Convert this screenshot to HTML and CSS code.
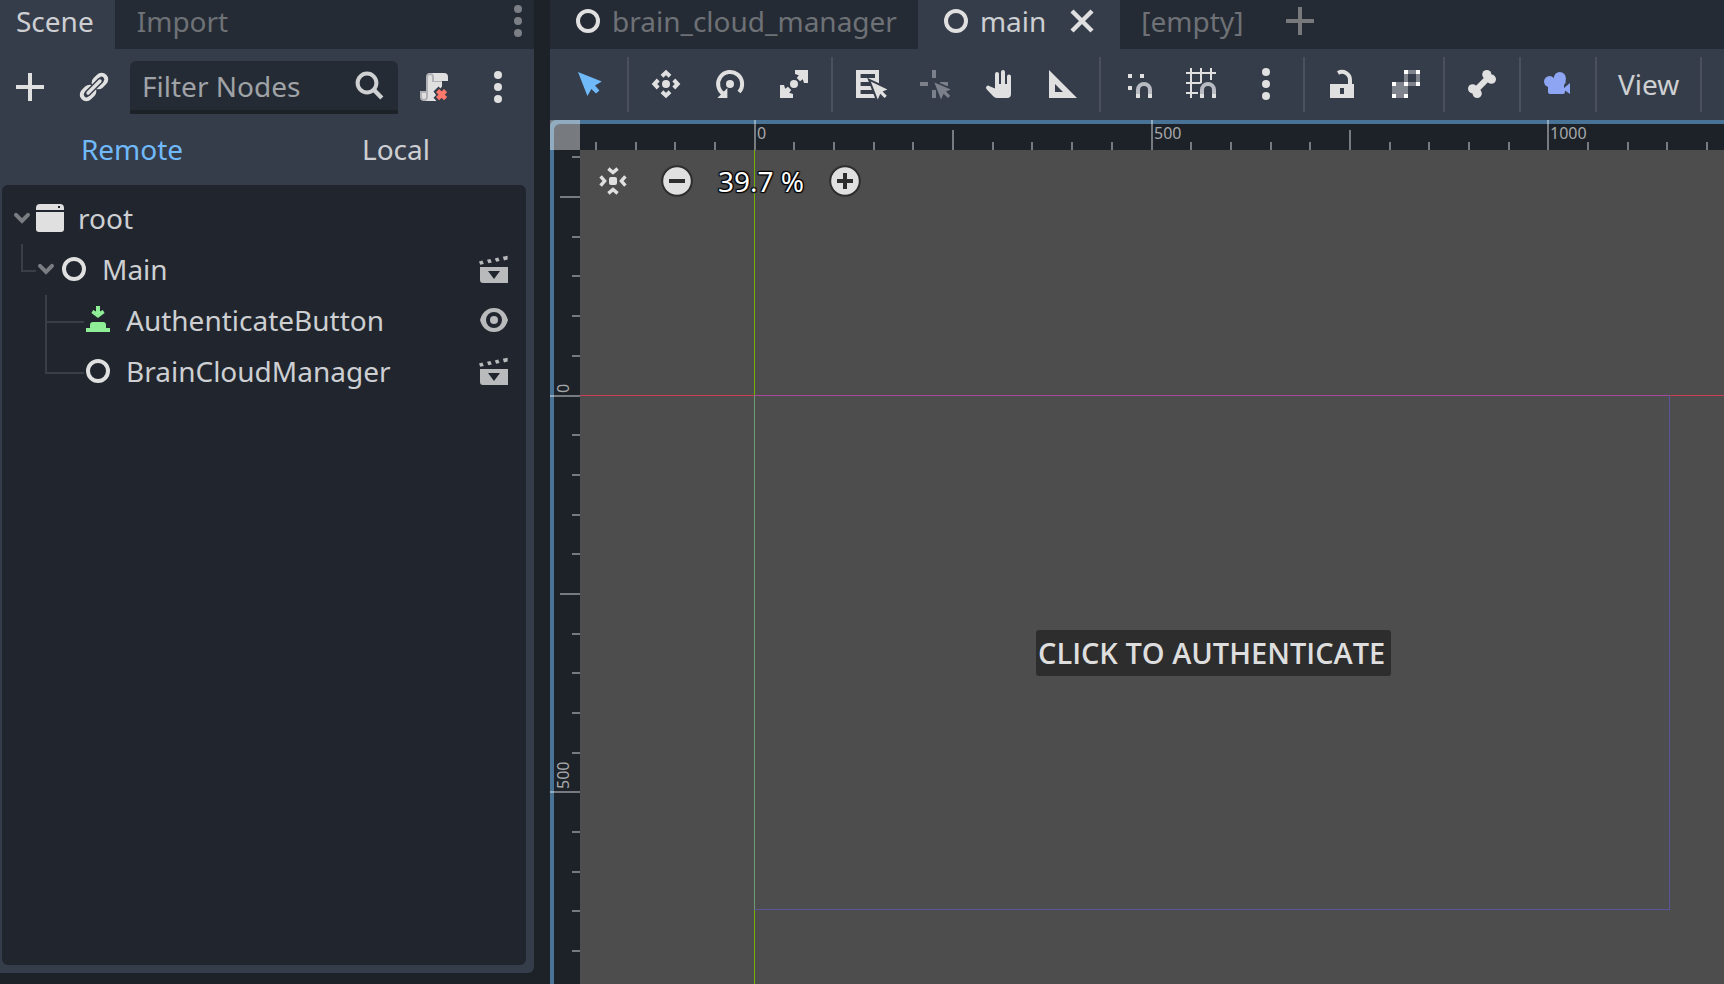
FILE: index.html
```html
<!DOCTYPE html>
<html lang="en">
<head>
<meta charset="utf-8">
<title>Scene editor</title>
<link rel="stylesheet" href="styles.css">
</head>
<body>
<svg class="defs" aria-hidden="true">
  <symbol id="i-node" viewBox="0 0 16 16"><circle cx="8" cy="8" r="5" fill="none" stroke="currentColor" stroke-width="2"/></symbol>
  <symbol id="i-dots" viewBox="0 0 16 16"><circle cx="8" cy="2" r="2"/><circle cx="8" cy="8" r="2"/><circle cx="8" cy="14" r="2"/></symbol>
  <symbol id="i-plus" viewBox="0 0 16 16"><path d="M7 1h2v6h6v2H9v6H7V9H1V7h6z"/></symbol>
  <symbol id="i-chevron" viewBox="0 0 12 16"><path d="M3 6.4 6 9.4 9 6.4" fill="none" stroke="currentColor" stroke-width="2" stroke-linecap="round"/></symbol>
  <symbol id="i-clapper" viewBox="0 0 16 16"><path fill-rule="evenodd" d="M1 7h14v8H2.5A1.5 1.5 0 0 1 1 13.500zM5 9l3 4 3-4z"/><path d="m.5 4.200 1.700-.400.700 1.700-1.800.400zM4.500 3.400l1.700-.400.700 1.700-1.700.400zM8.400 2.700l1.700-.400.700 1.700-1.700.400zM12.400 1.900 14.800 1.400V3.300L13 3.700z"/></symbol>
  <symbol id="i-magnet" viewBox="0 0 16 16"><path d="M8 13v-2a3 3 0 0 1 6 0v2" fill="none" stroke="#b9bcc2" stroke-width="2"/><path d="M7 13h2v2H7zM13 13h2v2h-2z"/></symbol>
</svg>

<aside class="dock">
  <nav class="tabs dock-tabs">
    <button class="tab active">Scene</button>
    <button class="tab">Import</button>
    <button class="tab-menu" aria-label="Dock options"><svg class="icon"><use href="#i-dots"/></svg></button>
  </nav>
  <div class="dock-body">
    <div class="filter-row">
      <button class="tool" aria-label="Add node"><svg class="icon"><use href="#i-plus"/></svg></button>
      <button class="tool" aria-label="Instance scene"><svg class="icon" viewBox="0 0 16 16"><g transform="translate(8 8) rotate(-45)" fill="none"><rect x="-7.700" y="-2.300" width="7" height="4.600" rx="2.300" stroke="currentColor" stroke-width="2"/><rect x=".7" y="-2.300" width="7" height="4.600" rx="2.300" stroke="currentColor" stroke-width="2"/><path d="M-4.400 0h8.800" stroke="#363d4a" stroke-width="3.200" stroke-linecap="round"/><path d="M-4.200 0h8.400" stroke="currentColor" stroke-width="1.700" stroke-linecap="round"/></g></svg></button>
      <label class="filter">
        <input type="text" placeholder="Filter Nodes" aria-label="Filter Nodes">
        <svg class="icon" viewBox="0 0 16 16"><g fill="none" stroke="currentColor"><circle cx="6.500" cy="6.500" r="4.700" stroke-width="2"/><path d="m9.900 9.900 4 4.100" stroke-width="2.200"/></g></svg>
      </label>
      <button class="tool" aria-label="Detach script"><svg class="icon" viewBox="0 0 16 16"><path d="M6 1a2 2 0 0 0-1.500 1v11L3 15h6.300l-1-1.500.9-1.200-1-1.500 1.800-2 .8.500L12 7.700V5h3V3a2 2 0 0 0-2-2z"/><path fill="#b0b2b5" d="M6 1a2 2 0 0 0-2 2v7H1v3a2 2 0 0 0 4 0V3a1 1 0 0 1 2 0v2.500h5V5H8V3a2 2 0 0 0-2-2z"/><path d="M2 11h2v2a1 1 0 0 1-2 0z"/><path d="M9 9l5.600 5.600M14.600 9 9 14.600" stroke="#363d4a" stroke-width="3.600"/><path d="M9.800 9.800l4 4M13.800 9.800l-4 4" stroke="#ff786b" stroke-width="2.200"/></svg></button>
      <button class="tool" aria-label="More"><svg class="icon"><use href="#i-dots"/></svg></button>
    </div>
    <div class="mode-row">
      <button class="mode on">Remote</button>
      <button class="mode">Local</button>
    </div>
    <ul class="tree">
      <li>
        <div class="row"><svg class="arrow"><use href="#i-chevron"/></svg><svg class="icon" viewBox="0 0 16 16"><path fill-rule="evenodd" d="M3 1h10a2 2 0 0 1 2 2v1H1V3a2 2 0 0 1 2-2zM12 2v1h1V2z"/><path d="M1 5h14v8.500a1.500 1.500 0 0 1-1.500 1.500h-11A1.500 1.500 0 0 1 1 13.500z"/></svg><span class="name">root</span></div>
        <ul>
          <li class="branch">
            <div class="row"><svg class="arrow"><use href="#i-chevron"/></svg><svg class="icon"><use href="#i-node"/></svg><span class="name">Main</span><button class="side" aria-label="Open scene"><svg class="icon"><use href="#i-clapper"/></svg></button></div>
            <ul>
              <li class="leaf">
                <div class="row"><svg class="icon green" viewBox="0 0 16 16"><path d="M7 1h2v2.800l1.400-.8.900 1.500L8 7 4.700 4.500l.9-1.500L7 3.800zM2 12h2v-1.500A1.500 1.500 0 0 1 5.500 9h5a1.500 1.500 0 0 1 1.500 1.500V12h2v2H2z"/></svg><span class="name">AuthenticateButton</span><button class="side" aria-label="Toggle visibility"><svg class="icon" viewBox="0 0 16 16"><path fill-rule="evenodd" d="M8 2c3.600 0 6 2.400 7 6-1 3.600-3.400 6-7 6s-6-2.400-7-6c1-3.600 3.400-6 7-6zM8 4a4 4 0 0 0 0 8 4 4 0 0 0 0-8z"/><circle cx="8" cy="8" r="2"/></svg></button></div>
              </li>
              <li class="leaf">
                <div class="row"><svg class="icon"><use href="#i-node"/></svg><span class="name">BrainCloudManager</span><button class="side" aria-label="Open scene"><svg class="icon"><use href="#i-clapper"/></svg></button></div>
              </li>
            </ul>
          </li>
        </ul>
      </li>
    </ul>
  </div>
</aside>

<main class="workspace">
  <nav class="tabs">
    <button class="tab scene"><svg class="icon"><use href="#i-node"/></svg>brain_cloud_manager</button>
    <button class="tab scene active"><svg class="icon"><use href="#i-node"/></svg>main<svg class="icon close" viewBox="0 0 16 16"><path d="m3 3 10 10M13 3 3 13" stroke="currentColor" stroke-width="2.200"/></svg></button>
    <button class="tab empty">[empty]</button>
    <button class="tab-add" aria-label="New scene"><svg class="icon"><use href="#i-plus"/></svg></button>
  </nav>

  <div class="toolbar">
    <button class="tool blue" aria-label="Select"><svg class="icon" viewBox="0 0 16 16"><path d="m2 2 4.700 12 2-3.500 2.300 2.200 1.700-1.500-2.200-2.400L13.900 6.700z"/></svg></button>
    <span class="sep"></span>
    <button class="tool" aria-label="Move"><svg class="icon" viewBox="0 0 16 16"><circle cx="8" cy="8" r="2"/><path d="M6 4.100 8 2.200l2 1.900M6 11.900l2 1.900 2-1.900M4.100 6 2.200 8l1.900 2M11.900 6l1.900 2-1.900 2" fill="none" stroke="currentColor" stroke-width="2"/></svg></button>
    <button class="tool" aria-label="Rotate"><svg class="icon" viewBox="0 0 16 16"><circle cx="8" cy="8" r="2"/><path d="M4.800 13A6 6 0 1 1 12.500 12" fill="none" stroke="currentColor" stroke-width="2"/><path d="M1.700 15h5v-5z"/></svg></button>
    <button class="tool" aria-label="Scale"><svg class="icon" viewBox="0 0 16 16"><circle cx="8" cy="8" r="2"/><path d="M8.500 1H15v6.500h-2l-.6-1.900L11 6.600 9.400 5l1-1.400L8.500 3zM7.500 15H1V8.500h2l.6 1.900L5 9.400 6.600 11l-1 1.400 1.900.6z"/></svg></button>
    <span class="sep"></span>
    <button class="tool" aria-label="List select"><svg class="icon" viewBox="0 0 16 16"><path fill-rule="evenodd" d="M1 1h11.500v14H1zM3.300 3v2h7.200V3zM3.300 7v2h9.200V7zM3.300 11v2h9.200v-2z"/><path d="M10.500 5h2v3h-2z"/><path d="m8.400 6.800 3.500 9 1.200-2.900 2.200 2.100 1.100-1.100-2.100-2.200 2.400-1z" stroke="#363d4a" stroke-width="2"/><path d="m8.400 6.800 3.500 9 1.200-2.900 2.200 2.100 1.100-1.100-2.100-2.200 2.400-1z"/></svg></button>
    <button class="tool dim" aria-label="Pivot"><svg class="icon" viewBox="0 0 16 16"><path d="M7 1h2v4H7zM1 7h4v2H1zM11 7h4v2h-4zM7 11h2v4H7z"/><path d="m8.200 7.200 3.300 8.600 1.300-2.900 2.200 2.100 1.100-1.100-2.100-2.200 2.400-1z" stroke="#363d4a" stroke-width="1.600"/><path d="m8.200 7.200 3.300 8.600 1.300-2.900 2.200 2.100 1.100-1.100-2.100-2.200 2.400-1z"/></svg></button>
    <button class="tool" aria-label="Pan"><svg class="icon" viewBox="0 0 16 16"><path d="M7.500 2a1 1 0 0 0-1 1v7.200L3.800 9.100a1 1 0 0 0-1.500 1.500L5.500 14a3 3 0 0 0 2 1h5a2 2 0 0 0 2-2V4.200a1 1 0 0 0-2 0V8h-1V2a1 1 0 0 0-2 0v6h-1V3a1 1 0 0 0-1-1z"/></svg></button>
    <button class="tool" aria-label="Ruler"><svg class="icon" viewBox="0 0 16 16"><path fill-rule="evenodd" d="M1.500 1v14h14zM4.500 8v4h4z"/></svg></button>
    <span class="sep"></span>
    <button class="tool" aria-label="Smart snap"><svg class="icon" viewBox="0 0 16 16"><path d="M3 3h2v2H3zM9 3h2v2H9zM3 9h2v2H3z"/><use href="#i-magnet"/></svg></button>
    <button class="tool" aria-label="Grid snap"><svg class="icon" viewBox="0 0 16 16"><path d="M2 0h1v2h4V0h1v2h4V0h1v2h2v1h-2v3h-1V3H8v4.500L7 8H3v4h3v1H3v2H2v-2H0v-1h2V8H0V7h2V3H0V2h2zM3 3v4h4V3z" fill-rule="evenodd"/><use href="#i-magnet"/></svg></button>
    <button class="tool" aria-label="Snapping options"><svg class="icon"><use href="#i-dots"/></svg></button>
    <span class="sep"></span>
    <button class="tool" aria-label="Lock"><svg class="icon" viewBox="0 0 16 16"><path fill-rule="evenodd" d="M2 8h12v7H2zM7 10v3h2v-3z"/><path d="M6 2.500A4 4 0 0 1 12 6v2.500" fill="none" stroke="currentColor" stroke-width="2"/></svg></button>
    <button class="tool" aria-label="Group"><svg class="icon" viewBox="0 0 16 16"><path fill="#7f838c" d="M1 7h8v8H1z"/><path fill="none" stroke="#7f838c" stroke-width="2" d="M8 2h6v6H8z"/><path fill="#fff" d="M1 7h2v2H1zM1 13h2v2H1zM7 13h2v2H7zM7 7h2v2H7zM7 1h2v2H7zM13 1h2v2h-2zM13 7h2v2h-2z"/></svg></button>
    <span class="sep"></span>
    <button class="tool" aria-label="Skeleton"><svg class="icon" viewBox="0 0 16 16"><circle cx="10.400" cy="3.300" r="2.300"/><circle cx="12.700" cy="5.600" r="2.300"/><circle cx="3.300" cy="10.400" r="2.300"/><circle cx="5.600" cy="12.700" r="2.300"/><path d="m4.600 11.400 6.800-6.800" stroke="currentColor" stroke-width="3"/></svg></button>
    <span class="sep"></span>
    <button class="tool violet" aria-label="Camera override"><svg class="icon" viewBox="0 0 16 16"><circle cx="3.800" cy="6.800" r="2.800"/><circle cx="8.900" cy="5" r="3"/><path d="M3 7l6-2h2.800v2.500q-.8.500-.8 1.500v1l3-2.500V13l-2.500-1.800v.8a1 1 0 0 1-1 1H4a1 1 0 0 1-1-1z"/></svg></button>
    <span class="sep"></span>
    <button class="tool">View</button>
    <span class="sep"></span>
  </div>

  <section class="viewport">
    <div class="corner"></div>
    <svg class="ruler-h" id="ruler-h"></svg>
    <svg class="ruler-v" id="ruler-v"></svg>
    <div class="canvas">
      <div class="axis-x"></div>
      <div class="axis-y"></div>
      <div class="frame"></div>
      <button class="auth">CLICK TO AUTHENTICATE</button>
      <div class="zoom">
        <button aria-label="Center view"><svg class="icon" viewBox="0 0 16 16"><rect x="6" y="6" width="4" height="4" rx="1"/><path d="M5.700 1.800 8 3.800l2.300-2M5.700 14.200l2.300-2 2.300 2M1.800 5.700l2 2.300-2 2.300M14.200 5.700l-2 2.300 2 2.300" fill="none" stroke="currentColor" stroke-width="1.700"/></svg></button>
        <button aria-label="Zoom out"><svg class="icon" viewBox="0 0 16 16"><circle cx="8" cy="8" r="7.400" stroke="#2e2e2e"/><path d="M4 7h8v2H4z" fill="#2e2e2e"/></svg></button>
        <button class="percent">39.7 %</button>
        <button aria-label="Zoom in"><svg class="icon" viewBox="0 0 16 16"><circle cx="8" cy="8" r="7.400" stroke="#2e2e2e"/><path d="M7 4h2v3h3v2H9v3H7V9H4V7h3z" fill="#2e2e2e"/></svg></button>
      </div>
    </div>
  </section>
</main>
<script src="rulers.js"></script>
</body>
</html>
```
FILE: styles.css
```css
:root {
  --base: #363d4a;
  --dark: #252b34;
  --darker: #1d2229;
  --tree: #21262e;
  --text: #cdcfd2;
  --icon: #e0e0e0;
  --muted: #6e7176;
}

* { box-sizing: border-box; }

body {
  margin: 0;
  height: 100vh;
  display: flex;
  gap: 16px;
  overflow: hidden;
  background: var(--darker);
  color: var(--text);
  font: 28px/38px "Noto Sans", "Open Sans", sans-serif;
}

button, input {
  font: inherit;
  color: inherit;
  background: none;
  border: 0;
  padding: 0;
  margin: 0;
}

ul { list-style: none; margin: 0; padding: 0; }

.defs { position: absolute; width: 0; height: 0; }

.icon {
  display: block;
  flex: none;
  width: 32px;
  height: 32px;
  color: var(--icon);
  fill: currentColor;
  overflow: visible;
}

.tabs {
  display: flex;
  height: 49px;
  flex: none;
  background: var(--dark);
}

.tab {
  display: flex;
  align-items: center;
  padding: 0 21px 7px;
  color: var(--muted);
}

.tab.active { background: var(--base); color: var(--text); }

/* Dock */
.dock {
  width: 31%;
  max-width: 534px;
  flex: none;
  display: flex;
  flex-direction: column;
  padding-bottom: 11px;
}

.dock-tabs .tab { padding: 0 22px 7px; }
.dock-tabs .tab.active { padding: 0 21px 7px 16px; }
.tab-menu { margin-left: auto; padding-bottom: 7px; }
.tab-menu .icon { color: #7c7f85; }

.dock-body {
  flex: 1;
  display: flex;
  flex-direction: column;
  padding: 12px 8px 8px 2px;
  background: var(--base);
  border-radius: 0 0 6px 0;
}

.filter-row { display: flex; gap: 8px; }

.filter-row .tool {
  width: 56px;
  display: flex;
  align-items: center;
  justify-content: center;
  padding-bottom: 1px;
}

.filter {
  flex: 1;
  min-width: 0;
  display: flex;
  align-items: center;
  height: 53px;
  padding: 0 12px;
  background: var(--dark);
  border-bottom: 4px solid var(--darker);
  border-radius: 6px 6px 0 0;
}

.filter input { flex: 1; min-width: 0; outline: 0; }
.filter input::placeholder { color: #9fa2a6; opacity: 1; }
.filter .icon { color: #cfd0d2; }

.mode-row { display: flex; gap: 4px; padding: 16px 0 17px; }
.mode { flex: 1; }
.mode.on { color: #70bafa; }

.tree {
  flex: 1;
  padding: 8px;
  background: var(--tree);
  border-radius: 6px;
}

.tree ul { padding-left: 24px; }
.tree li { position: relative; }
.row { display: flex; align-items: center; height: 51px; padding-bottom: 1px; }
.leaf .row { padding-left: 24px; }
.arrow { width: 24px; height: 32px; color: #7a7d82; }
.name { margin-left: 12px; flex: 1; }
.side { margin-right: 8px; }
.side .icon { color: #b9babc; }
.green { color: #8eef97; }

.branch::before, .leaf::before {
  content: "";
  position: absolute;
  left: -13px;
  top: 0;
  width: 13px;
  height: 26px;
  border: solid #3a3f47;
  border-width: 0 0 2px 2px;
}

.leaf::before { width: 37px; }

.leaf:not(:last-child)::after {
  content: "";
  position: absolute;
  left: -13px;
  top: 0;
  bottom: 0;
  width: 2px;
  background: #3a3f47;
}

/* Workspace */
.workspace {
  flex: 1;
  min-width: 0;
  display: flex;
  flex-direction: column;
}

.scene { padding: 0 22px 7px; gap: 8px; }
.scene:first-child { padding-right: 21px; }
.scene .close { margin-left: 12px; }
.tab-add { padding: 0 20px 7px; }
.tab-add .icon { color: #77797a; }

.toolbar {
  display: flex;
  align-items: center;
  height: 71px;
  flex: none;
  padding: 0 0 1px 8px;
  overflow: hidden;
  background: var(--base);
}

.toolbar .tool { padding: 0 16px; flex: none; }
.toolbar .blue .icon { color: #70bafa; }
.toolbar .violet .icon { color: #8da5f3; }
.toolbar .dim .icon { color: #7b808a; }

.sep {
  flex: none;
  width: 2px;
  height: 55px;
  margin: 0 5px;
  background: #4a505d;
}

.viewport {
  flex: 1;
  min-height: 0;
  display: grid;
  grid-template: 30px minmax(0, 1fr) / 30px minmax(0, 1fr);
  border-radius: 6px 0 0 0;
  background: var(--darker);
  box-shadow: inset 4px 4px 0 #487397;
}

.corner { background: rgba(255, 255, 255, .4); }

.ruler-h, .ruler-v {
  display: block;
  width: 100%;
  height: 100%;
  font-size: 16px;
}

.ruler-h rect, .ruler-v rect { fill: rgba(255, 255, 255, .4); }
.ruler-h text, .ruler-v text { fill: #a5a7aa; }

.canvas { position: relative; overflow: hidden; background: #4d4d4d; }

.axis-x, .axis-y, .frame, .auth, .zoom { position: absolute; }
.axis-x { left: 0; right: 0; top: 245px; height: 1px; background: #cc3d55; }
.axis-y { left: 174px; top: 0; bottom: 0; width: 1px; background: #74b400; }

.frame {
  left: 174px;
  top: 245px;
  width: 916px;
  height: 515px;
  border: 1px solid #5a559b;
  border-top-color: #a54a9b;
  border-left-color: #6f9a78;
}

.auth {
  left: 456px;
  top: 480px;
  width: 355px;
  height: 46px;
  padding-left: 2px;
  text-align: left;
  white-space: nowrap;
  background: #2d2d2d;
  color: #dedede;
  border-radius: 3px;
  font-family: "Open Sans", sans-serif;
  font-size: 29px;
  font-weight: 600;
}

.zoom {
  left: 17px;
  top: 12px;
  display: flex;
  align-items: center;
  gap: 24px;
}

.zoom button:first-child { margin-right: 8px; }

.percent {
  width: 88px;
  white-space: nowrap;
  color: #fff;
  text-shadow: 1px 1px 1px #000, -1px -1px 1px #000, 1px -1px 1px #000, -1px 1px 1px #000, 0 0 2px #000;
}
```
FILE: rulers.js
```js
const NS = "http://www.w3.org/2000/svg";
const STEP = 39.69;
const SIZE = 30;

function add(parent, tag, attrs, text) {
  const el = document.createElementNS(NS, tag);
  for (const key in attrs) el.setAttribute(key, attrs[key]);
  if (text !== undefined) el.textContent = text;
  parent.appendChild(el);
}

function drawRuler(svg, origin, vertical) {
  const length = vertical ? svg.clientHeight : svg.clientWidth;
  for (let k = Math.ceil(-origin / STEP); origin + k * STEP < length; k++) {
    const pos = Math.round(origin + k * STEP) - 1;
    const size = k % 10 === 0 ? SIZE : k % 5 === 0 ? 20 : 8;
    if (vertical) {
      add(svg, "rect", { x: SIZE - size, y: pos, width: size, height: 2 });
    } else {
      add(svg, "rect", { x: pos, y: SIZE - size, width: 2, height: size });
    }
    if (k % 10 === 0) {
      const place = vertical
        ? { transform: `translate(19 ${pos - 2}) rotate(-90)` }
        : { x: pos + 3, y: 19 };
      add(svg, "text", place, Math.abs(k * 50));
    }
  }
}

drawRuler(document.getElementById("ruler-h"), 174.6, false);
drawRuler(document.getElementById("ruler-v"), 245.5, true);
```
